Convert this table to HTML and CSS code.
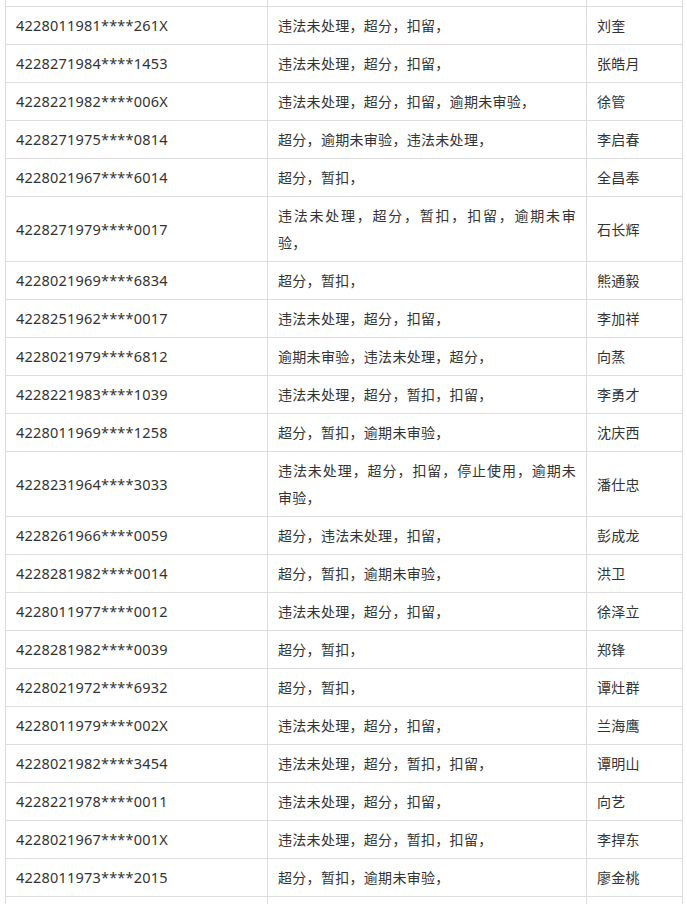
FILE: index.html
```html
<!DOCTYPE html>
<html lang="zh-CN">
<head>
<meta charset="utf-8">
<title>名单</title>
<link rel="stylesheet" href="styles.css">
</head>
<body>
<div class="sheet">
<table class="list">
<colgroup><col class="c-id"><col class="c-state"><col class="c-name"></colgroup>
<tbody>
<tr class="cut-top"><td></td><td></td><td></td></tr>
<tr><td>4228011981****261X</td><td>违法未处理，超分，扣留，</td><td>刘奎</td></tr>
<tr><td>4228271984****1453</td><td>违法未处理，超分，扣留，</td><td>张皓月</td></tr>
<tr><td>4228221982****006X</td><td>违法未处理，超分，扣留，逾期未审验，</td><td>徐管</td></tr>
<tr><td>4228271975****0814</td><td>超分，逾期未审验，违法未处理，</td><td>李启春</td></tr>
<tr><td>4228021967****6014</td><td>超分，暂扣，</td><td>全昌奉</td></tr>
<tr><td>4228271979****0017</td><td>违法未处理，超分，暂扣，扣留，逾期未审验，</td><td>石长辉</td></tr>
<tr><td>4228021969****6834</td><td>超分，暂扣，</td><td>熊通毅</td></tr>
<tr><td>4228251962****0017</td><td>违法未处理，超分，扣留，</td><td>李加祥</td></tr>
<tr><td>4228021979****6812</td><td>逾期未审验，违法未处理，超分，</td><td>向蒸</td></tr>
<tr><td>4228221983****1039</td><td>违法未处理，超分，暂扣，扣留，</td><td>李勇才</td></tr>
<tr><td>4228011969****1258</td><td>超分，暂扣，逾期未审验，</td><td>沈庆西</td></tr>
<tr><td>4228231964****3033</td><td>违法未处理，超分，扣留，停止使用，逾期未审验，</td><td>潘仕忠</td></tr>
<tr><td>4228261966****0059</td><td>超分，违法未处理，扣留，</td><td>彭成龙</td></tr>
<tr><td>4228281982****0014</td><td>超分，暂扣，逾期未审验，</td><td>洪卫</td></tr>
<tr><td>4228011977****0012</td><td>违法未处理，超分，扣留，</td><td>徐泽立</td></tr>
<tr><td>4228281982****0039</td><td>超分，暂扣，</td><td>郑锋</td></tr>
<tr><td>4228021972****6932</td><td>超分，暂扣，</td><td>谭灶群</td></tr>
<tr><td>4228011979****002X</td><td>违法未处理，超分，扣留，</td><td>兰海鹰</td></tr>
<tr><td>4228021982****3454</td><td>违法未处理，超分，暂扣，扣留，</td><td>谭明山</td></tr>
<tr><td>4228221978****0011</td><td>违法未处理，超分，扣留，</td><td>向艺</td></tr>
<tr><td>4228021967****001X</td><td>违法未处理，超分，暂扣，扣留，</td><td>李捍东</td></tr>
<tr><td>4228011973****2015</td><td>超分，暂扣，逾期未审验，</td><td>廖金桃</td></tr>
<tr class="cut-bottom"><td></td><td></td><td></td></tr>
</tbody>
</table>
</div>
</body>
</html>
```

FILE: styles.css
```css
html, body {
  margin: 0;
  padding: 0;
  background: #ffffff;
}

.sheet {
  padding-left: 5px;
  height: 904px;
  overflow: hidden;
}

.list {
  border-collapse: collapse;
  table-layout: fixed;
  width: 677px;
  font-family: "Noto Sans CJK SC", "Noto Sans", sans-serif;
  font-size: 14px;
  letter-spacing: 0.3px;
  color: #333333;
}

.c-id { width: 262px; }
.c-state { width: 319px; }
.c-name { width: 96px; }

.list td {
  border: 1px solid #dddddd;
  padding: 5px 10px;
  line-height: 27px;
  vertical-align: middle;
  text-align: justify;
  word-break: normal;
  text-spacing-trim: space-all;
}

.list td:first-child {
  font-family: "Noto Sans", "Noto Sans CJK SC", sans-serif;
  font-size: 14.5px;
  letter-spacing: 0.2px;
}

.list .cut-top td {
  border-top-style: hidden;
  padding: 0;
  height: 6px;
  line-height: 0;
}

.list .cut-bottom td {
  height: 37px;
}
```
